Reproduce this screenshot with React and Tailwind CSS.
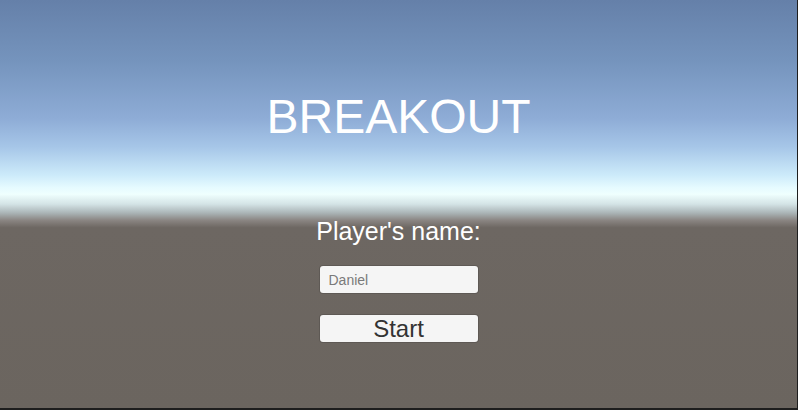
import React, { useState } from 'react';

const App = () => {
  const [name, setName] = useState('');

  return (
    <div
      className="w-full h-[410px] overflow-hidden border-r border-b-2 border-[#1e1e1e] bg-[linear-gradient(to_bottom,#6580a9_0%,#7594bd_15%,#8eacd6_29%,#a6c6e8_36%,#cdebfa_43%,#e6fbff_46%,#effffe_47.6%,#d4e4e6_50%,#aab4b6_52.2%,#8a8582_54%,#6d6762_55.8%,#6b655f_100%)] flex flex-col items-center pt-[93px] font-['Liberation_Sans',Arial,sans-serif]"
    >
      <h1 className="text-[48px] leading-none text-white">BREAKOUT</h1>

      <p className="mt-[78px] text-[25px] leading-none text-white">Player's name:</p>

      <input
        type="text"
        value={name}
        onChange={(e) => setName(e.target.value)}
        placeholder="Daniel"
        className="mt-[22px] w-[158px] h-[27px] rounded-[3px] bg-[#f5f5f5] pl-[9px] text-[14px] text-[#333] placeholder:text-[#7a7a7a] outline-none shadow-[0_0_0_1px_rgba(0,0,0,0.12)]"
      />

      <button className="mt-[22px] w-[158px] h-[27px] rounded-[3px] bg-[#f5f5f5] text-[24px] leading-none text-[#333] shadow-[0_0_0_1px_rgba(0,0,0,0.12)] flex items-center justify-center">
        Start
      </button>
    </div>
  );
};

export default App;
